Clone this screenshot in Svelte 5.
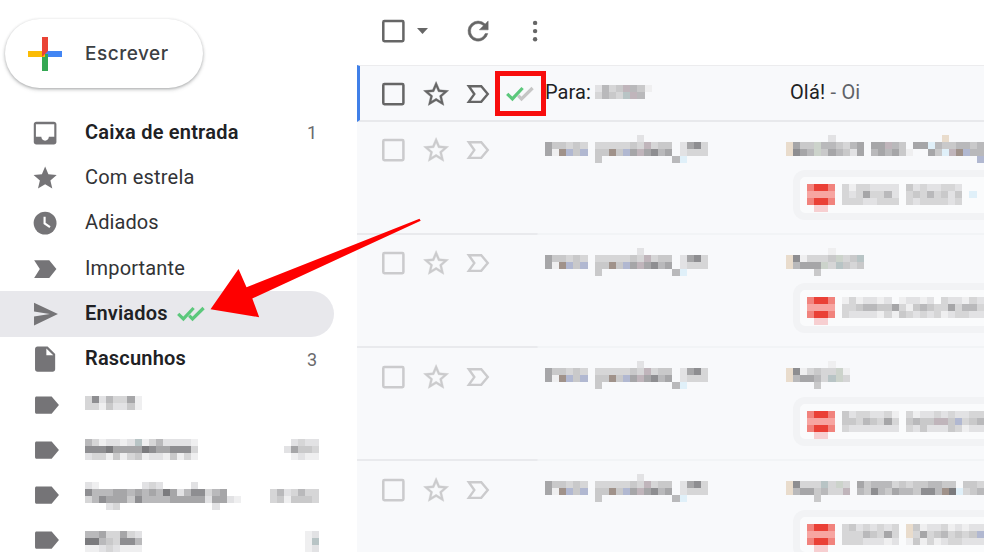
<script>
  const CELL = 7.08;
  const tones = {
    1: '#efeff0', 2: '#e2e2e4', 3: '#d6d6d7', 4: '#c9c9ca', 5: '#b9b9bb', 6: '#a6a6a8', 7: '#8e8e91', 8: '#7b7b7e',
    b: '#b1b8d1', n: '#a0928a', p: '#c0b5bb', g: '#ccd3cb', t: '#b8c4c5', e: '#e9dccc', l: '#e0f0f9',
    r: '#ea4036', o: '#f1837d', q: '#f7a5a1', s: '#f7cfd1'
  };

  const folders = [
    { icon: 'inbox', name: 'Caixa de entrada', count: '1', bold: true, spacing: 0.22 },
    { icon: 'star', name: 'Com estrela', spacing: 0.2 },
    { icon: 'clock', name: 'Adiados', spacing: 0.1 },
    { icon: 'important', name: 'Importante', spacing: 0.15 },
    { icon: 'send', name: 'Enviados', bold: true, active: true, spacing: 0.18 },
    { icon: 'draft', name: 'Rascunhos', count: '3', bold: true, spacing: 0.2 },
    { icon: 'label', top: 14.2, mosaic: ['37253361', '33142241'] },
    { icon: 'label', top: 12, mosaic: ['5312212t13522221', '7778666687667773', '2331413412214131'], side: ['.2322', '26443', '.1211'] },
    { icon: 'label', top: 9.2, mosaic: ['21......232....2', '75556656565862577356', '3576664755556666626621', '...23.............2'], side: ['.......', '3523533', '3414443', ''] },
    { icon: 'label', top: 13.2, mosaic: ['55633632', '88543775', '11232111'], side: ['12', '1t', '12'] }
  ];

  const person = ['.............2', '644343.3333343p344.2673', '61nb4b.44n4b6p6756.2333', '.......4..........5l'];
  const pdf = ['orrro'.slice(0, 2) + 'ro', 'qqqq', 'orro', '.ss.'];
  const mails = [
    {
      subject: ['......2...............e', 'e644g554356.66p54.66l5445545', 'e765g465426.565641..64lpnb55', '...........................b'],
      file: ['31332222.42322332', '32363352.34353424.l', '33322333.32333323']
    },
    {
      subject: ['......1', 'e713334g34t', 'e5666g3t434', '....4'],
      file: ['1312212.12212.3221322', '334554463145433635535', '3222213143232312332222']
    },
    {
      subject: ['......1', 'e713433g1', 'e56653tg3', '....4'],
      file: ['42332231.31223232233', '44354363.4544pp4b345', '32222222.32422243122']
    },
    {
      subject: ['', 'e7333t3g3.64555343445544.443', 'e5664533p.547546554775n8l345', '....4'],
      file: ['34232323.e4122312122', '33354363.e363453434b', '33322212.14131233222']
    }
  ];
</script>

{#snippet mosaic(rows)}
  <svg class="mosaic" width={Math.max(...rows.map((r) => r.length)) * CELL} height={rows.length * CELL} shape-rendering="crispEdges">
    {#each rows as row, y}
      {#each row.split('') as c, x}
        {#if tones[c]}
          <rect x={x * CELL} y={y * CELL} width={CELL + 0.05} height={CELL + 0.05} fill={tones[c]} />
        {/if}
      {/each}
    {/each}
  </svg>
{/snippet}

{#snippet box()}
  <svg class="ico" viewBox="0 0 24 24"><rect x="4.2" y="4" width="16" height="16" rx=".9" fill="none" stroke="currentColor" stroke-width="2" /></svg>
{/snippet}

{#snippet ticks(second)}
  <svg class="ticks" width="28" height="16" viewBox="0 0 28 16" fill="none" stroke-width="3.2">
    <path d="M12.2 9.6l3.3 3.3L26.6 2" stroke={second} />
    <path d="M1.2 7.8l5.2 5.1L16.6 2" stroke="#5cc87c" />
  </svg>
{/snippet}

{#snippet rowIcons()}
  <span class="slot">{@render box()}</span>
  <span class="slot">
    <svg class="ico" viewBox="0 0 24 24"><path fill="currentColor" stroke="currentColor" stroke-width=".3" d="M22 9.24l-7.19-.62L12 2 9.19 8.63 2 9.24l5.46 4.73L5.82 21 12 17.27 18.18 21l-1.63-7.03L22 9.24zM12 15.4l-3.76 2.27 1-4.28-3.32-2.88 4.38-.38L12 6.1l1.71 4.04 4.38.38-3.32 2.88 1 4.28L12 15.4z" /></svg>
  </span>
  <span class="slot">
    <svg class="ico" viewBox="0 0 24 24"><path fill="none" stroke="currentColor" stroke-width="1.9" d="M4.6 5.8h9.9L19.7 12l-5.2 6.2H4.6L9 12z" /></svg>
  </span>
{/snippet}

<div class="screen">
  <aside>
    <button class="compose">
      <svg width="34" height="34" viewBox="0 0 34 34">
        <path fill="#4285f4" d="M17 14h17v6H17z" />
        <path fill="#34a853" d="M14 17h6v17h-6z" />
        <path fill="#fbbc05" d="M0 14h17v6H0z" />
        <path fill="#ea4335" d="M14 0h6v14l-6 6z" />
      </svg>
      <span>Escrever</span>
    </button>
    <nav>
      {#each folders as f}
        <div class="folder" class:active={f.active} class:bold={f.bold}>
          <svg class="ico" viewBox="0 0 24 24" fill="currentColor">
            {#if f.icon === 'inbox'}
              <path fill-rule="evenodd" d="M19 3H5c-1.1 0-2 .9-2 2v14c0 1.1.9 2 2 2h14c1.1 0 2-.9 2-2V5c0-1.1-.9-2-2-2zm.3 12H15c0 1.66-1.35 3-3 3s-3-1.34-3-3H4.7V5h14.6z" />
            {:else if f.icon === 'star'}
              <path d="M12 17.27L18.18 21l-1.64-7.03L22 9.24l-7.19-.61L12 2 9.19 8.63 2 9.24l5.46 4.73L5.82 21z" transform="translate(1 1) scale(.92)" />
            {:else if f.icon === 'clock'}
              <circle cx="12" cy="12" r="9.1" />
              <path d="M11.6 7v5.3l4.3 2.9" fill="none" stroke="#fff" stroke-width="1.7" />
            {:else if f.icon === 'important'}
              <path d="M3.3 5h12L21 12l-5.7 7h-12l4.5-7z" />
            {:else if f.icon === 'send'}
              <path d="M3.2 3l19 9-19 9v-7l12.5-2-12.5-2z" />
            {:else if f.icon === 'draft'}
              <path fill-rule="evenodd" d="M6 2C4.9 2 4 2.9 4 4v16c0 1.1.9 2 2 2h12c1.1 0 2-.9 2-2V8l-6-6zm7 1.5V9h5.5z" />
            {:else}
              <path d="M5.2 5.2h12L23 12l-5.8 6.8h-12c-.7 0-1.2-.5-1.2-1.2V6.4c0-.7.5-1.2 1.2-1.2z" />
            {/if}
          </svg>
          {#if f.name}
            <span class="name" style="letter-spacing:{f.spacing}px">{f.name}</span>
            {#if f.active}{@render ticks('#5cc87c')}{/if}
            <span class="count">{f.count ?? ''}</span>
          {:else}
            <span class="hidden-text" style="margin-top:{f.top}px">
              {@render mosaic(f.mosaic)}
              {#if f.side}{@render mosaic(f.side)}{/if}
            </span>
          {/if}
        </div>
      {/each}
    </nav>
  </aside>

  <main>
    <header>
      <span class="slot">{@render box()}</span>
      <svg class="caret" width="11" height="6" viewBox="0 0 11 6"><path d="M0 0h11L5.5 6z" fill="#666" /></svg>
      <svg class="ico refresh" viewBox="0 0 24 24"><path fill="currentColor" stroke="currentColor" stroke-width=".4" d="M17.65 6.35A7.96 7.96 0 0 0 12 4a8 8 0 1 0 7.73 10h-2.08A6 6 0 1 1 12 6c1.66 0 3.14.69 4.22 1.78L13 11h7V4z" /></svg>
      <svg class="ico" viewBox="0 0 24 24" fill="currentColor"><circle cx="12" cy="5.5" r="1.75" /><circle cx="12" cy="12" r="1.75" /><circle cx="12" cy="18.5" r="1.75" /></svg>
    </header>

    <div class="mail first">
      {@render rowIcons()}
      <span class="receipt">{@render ticks('#c6c6c6')}</span>
      <span class="to"><span>Para:</span>{@render mosaic(['2534p541', '3543tp5'])}</span>
      <span class="subject">Olá! <i>- Oi</i></span>
    </div>

    {#each mails as m}
      <div class="mail">
        {@render rowIcons()}
        <span class="receipt"></span>
        <span class="person">{@render mosaic(person)}</span>
        <div class="body">
          {@render mosaic(m.subject)}
          <div class="chip">{@render mosaic(pdf)}{@render mosaic(m.file)}</div>
        </div>
      </div>
    {/each}
  </main>

  <div class="frame"></div>
  <svg class="arrow" width="984" height="552"><path fill="#fe0000" d="M210.5 309.3L238.5 269l8 18.3L419.5 218.7l1.2 2L252.3 298.5l6.9 18.7z" /></svg>
</div>

<style>
  .screen {
    position: relative;
    display: flex;
    width: 984px;
    height: 552px;
    overflow: hidden;
    background: #fff;
    font-family: Roboto, 'Liberation Sans', sans-serif;
    font-size: 20px;
    color: #202124;
  }
  svg { display: block; flex: none; }
  .ico { width: 30.2px; height: 30.2px; }
  aside { width: 357px; flex: none; }
  .compose {
    display: flex;
    align-items: center;
    gap: 23px;
    width: 198px;
    height: 69px;
    margin: 19px 0 22.2px 5px;
    padding: 0 0 0 23px;
    border: 0;
    border-radius: 35px;
    background: #fff;
    box-shadow: 0 1px 3px rgba(60, 64, 67, .36), 0 2px 4px rgba(60, 64, 67, .14);
    font: 500 19px Inter, Roboto, sans-serif;
    letter-spacing: .5px;
    color: #3c4043;
  }
  .folder {
    display: flex;
    align-items: center;
    box-sizing: border-box;
    width: 334px;
    height: 45.3px;
    padding: 0 17px 0 30px;
    border-radius: 0 23px 23px 0;
    color: #757477;
  }
  .active { background: #e8e8ec; }
  .name { margin: -2px 0 0 24.8px; color: #323336; white-space: nowrap; }
  .bold .name { font-weight: 600; color: #202124; }
  .folder .ticks { margin-left: 9.5px; }
  .count { margin: 0 0 0 auto; font-size: 18px; color: #6a6a6d; }
  .hidden-text {
    align-self: flex-start;
    display: flex;
    justify-content: space-between;
    width: 234.2px;
    flex: none;
    margin-left: 24.8px;
  }
  main { flex: 1; min-width: 0; }
  header {
    display: flex;
    align-items: center;
    height: 62.5px;
    margin-bottom: 2px;
    padding-left: 15px;
    color: #666;
  }
  .slot { display: flex; justify-content: center; width: 42.6px; flex: none; }
  .caret { margin-left: 2px; }
  .refresh { margin: 0 26.2px 0 35.8px; }
  .mail {
    display: flex;
    align-items: flex-start;
    box-sizing: border-box;
    height: 113.28px;
    padding-left: 15px;
    border-bottom: 2px solid;
    border-image: linear-gradient(90deg, #e9eaed 180px, #f2f4f6 182px) 1;
    background: #f8f9fb;
    color: #cbcbcd;
  }
  .mail > .slot { padding-top: 13.5px; }
  .first {
    height: 57.2px;
    padding-left: 12px;
    border-width: 1px 0 2px 3px;
    border-style: solid;
    border-image: none;
    border-color: #ececee #ececee #e8e9ec #4080e8;
    color: #666;
  }
  .first > .slot { padding-top: 13px; }
  .receipt { display: flex; width: 45.1px; flex: none; padding: 20px 0 0 6.5px; box-sizing: border-box; }
  .to { display: flex; width: 245px; flex: none; padding-top: 14px; color: #202124; line-height: 24px; }
  .to > span { width: 50px; letter-spacing: .1px; }
  .to :global(.mosaic) { margin-top: 5.5px; }
  .subject { padding-top: 14px; line-height: 24px; white-space: nowrap; letter-spacing: .2px; }
  .subject i { font-style: normal; color: #5f6368; }
  .first .subject { color: #202124; }
  .person { width: 241px; flex: none; padding-top: 13px; }
  .body { padding-top: 13px; flex: 1; min-width: 0; overflow: hidden; }
  .chip {
    display: flex;
    gap: 7px;
    box-sizing: border-box;
    height: 49.5px;
    margin: 7.08px 0 0 7.08px;
    padding: 7px 0 0 7px;
    border: 7px solid #f2f3f5;
    border-right: 0;
    border-radius: 12px 0 0 12px;
    background: #fafbfc;
  }
  .frame {
    position: absolute;
    left: 495px;
    top: 71px;
    width: 51px;
    height: 44.5px;
    box-sizing: border-box;
    border: 5px solid #f80d0d;
  }
  .arrow { position: absolute; left: 0; top: 0; }
</style>
